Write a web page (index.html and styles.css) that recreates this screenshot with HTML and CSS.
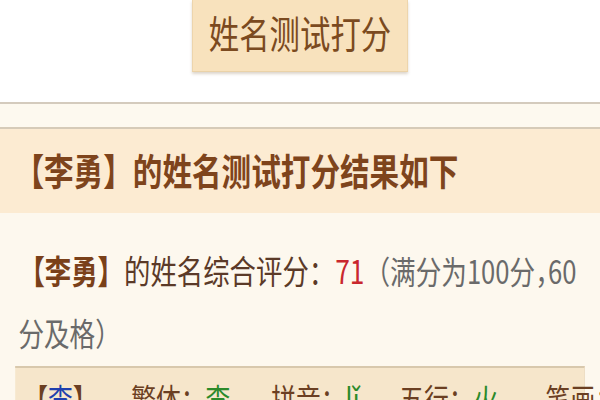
FILE: index.html
```html
<!DOCTYPE html>
<html lang="zh-CN">
<head>
<meta charset="utf-8">
<title>姓名测试打分</title>
<link rel="stylesheet" href="styles.css">
</head>
<body>
<div class="page">
  <div class="top">
    <div class="btn">姓名测试打分</div>
  </div>
  <div class="strip"></div>
  <div class="result-head">【李勇】的姓名测试打分结果如下</div>
  <div class="result-body">
    <p class="score"><b class="nm">【李勇】</b><span class="lbl">的姓名综合评分：</span><span class="num">71</span><span class="note">（满分为100分<span class="half">，</span>60分及格）</span></p>
    <div class="table">
      <div class="row">
        <span class="cell c1">【<span class="blue">李</span>】</span>
        <span class="cell c2">繁体：<span class="green">李</span></span>
        <span class="cell c3">拼音：<span class="green">lǐ</span></span>
        <span class="cell c4">五行：<span class="green">火</span></span>
        <span class="cell c5">笔画：<span class="green">7</span></span>
      </div>
    </div>
  </div>
</div>
</body>
</html>
```
FILE: styles.css
```css
html, body {
  margin: 0;
  padding: 0;
  overflow: hidden;
  background: #fdf8ee;
}
.page {
  width: 750px;
  height: 400px;
  transform: scaleX(0.8);
  transform-origin: 0 0;
  font-family: "Noto Sans CJK SC", "Noto Sans", sans-serif;
  background: #fdf8ee;
}
.top {
  background: #ffffff;
  height: 102px;
  display: flex;
  justify-content: center;
}
.btn {
  width: 270px;
  height: 72px;
  box-sizing: border-box;
  background: #f8e2bd;
  border: 1px solid #ead2a8;
  border-top: none;
  box-shadow: 0 2px 3px rgba(120, 90, 50, 0.25);
  color: #7b4a20;
  font-size: 38px;
  line-height: 64px;
  text-align: center;
}
.strip {
  height: 23px;
  border-top: 2px solid #d4cbbd;
  border-bottom: 2px solid #d6cbb8;
  background: #fdf9ef;
}
.result-head {
  height: 84px;
  line-height: 82px;
  background: #fcebd2;
  color: #7e441c;
  font-size: 37px;
  font-weight: 700;
  padding-left: 18px;
}
.result-body {
  padding: 26px 19px 0 19px;
}
.score {
  margin: 0;
  font-size: 33px;
  line-height: 62px;
  color: #5b3a28;
  padding-left: 4px;
}
.nm {
  color: #7a4019;
  font-weight: 700;
}
.num {
  color: #c9272d;
}
.note {
  color: #6a6a6a;
  font-size: 32px;
}
.half {
  font-feature-settings: "halt";
}
.table {
  margin-top: 3px;
  background: #f6e6cb;
  border-top: 2px solid #d8c8ac;
  border-right: 1px solid #eadbc2;
  height: 60px;
}
.row {
  display: flex;
  padding: 8px 0 0 10px;
  font-size: 31px;
  line-height: 44px;
  color: #6b3f22;
  white-space: nowrap;
}
.cell {
  flex: none;
}
.c1 { width: 135px; }
.c2 { width: 175px; }
.c3 { width: 160px; }
.c4 { width: 183px; }
.blue {
  color: #1f3fae;
}
.green {
  color: #2c8a2a;
}
```
